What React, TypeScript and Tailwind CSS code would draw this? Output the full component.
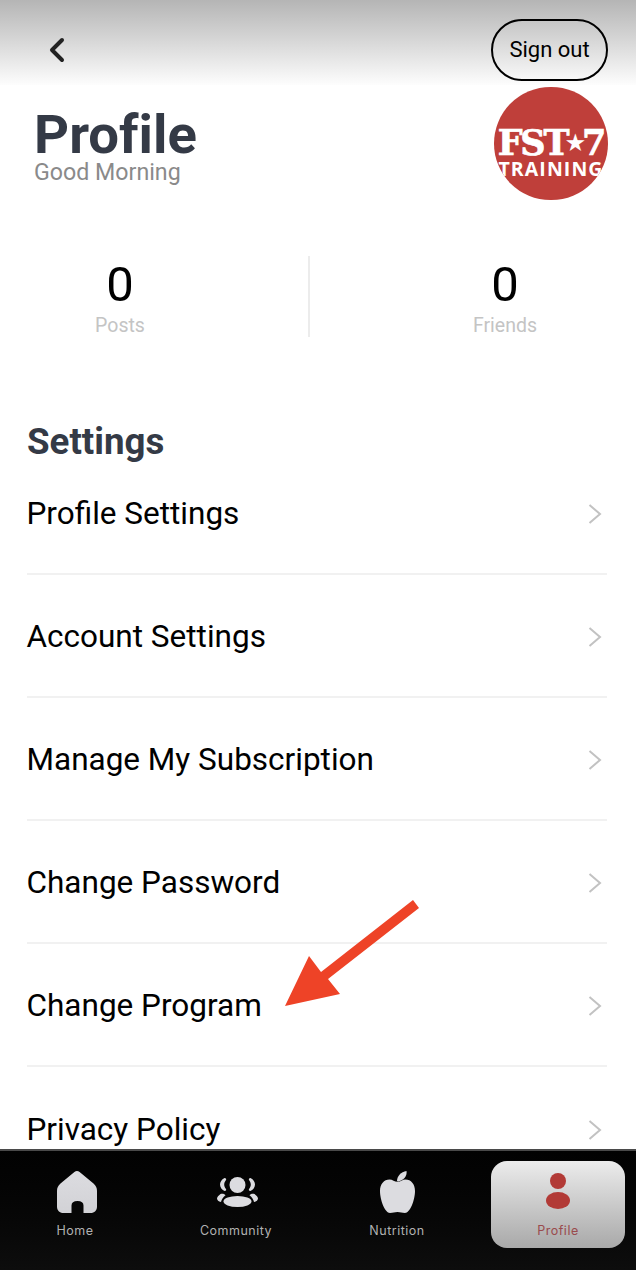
import { ChevronLeft } from "lucide-react";

const settingsRows = [
  "Profile Settings",
  "Account Settings",
  "Manage My Subscription",
  "Change Password",
  "Change Program",
  "Privacy Policy",
];

function FstLogo() {
  return (
    <div className="flex h-[113px] w-[114px] shrink-0 flex-col items-center justify-center overflow-hidden rounded-full bg-[#bf3f3a] pt-[20px] text-white">
      <div className="flex items-center font-['DejaVu_Serif',serif] text-[35px] leading-[26px] font-bold tracking-[-2.2px] whitespace-nowrap [-webkit-text-stroke:0.7px_white]">
        FST<span className="mx-[-1px] text-[21px] [-webkit-text-stroke:0]">★</span>7
      </div>
      <div className="mt-[5px] font-['Open_Sans',sans-serif] text-[19.5px] leading-[16px] font-bold tracking-[1.1px] whitespace-nowrap">
        TRAINING
      </div>
    </div>
  );
}

function Stat({ value, label, className }: { value: string; label: string; className: string }) {
  return (
    <div className={`flex w-[240px] flex-col items-center pt-[3px] ${className}`}>
      <span className="text-[49px] leading-[52px] text-black">{value}</span>
      <span className="mt-[2px] text-[19.5px] leading-[26px] text-[#c4c4c4]">{label}</span>
    </div>
  );
}

function RowChevron() {
  return (
    <svg viewBox="0 0 14 22" className="h-[22px] w-[14px]" fill="none" stroke="#c2c2c2" strokeWidth="2">
      <path d="M1.5 2 L12 11 L1.5 20" />
    </svg>
  );
}

function Row({ label, last }: { label: string; last: boolean }) {
  return (
    <div className={`flex h-[123px] items-center justify-between pt-[2px] ${last ? "" : "border-b-2 border-[#f1f1f1]"}`}>
      <span className="ml-[-0.5px] text-[31.5px] leading-[40px] text-black">{label}</span>
      <div className="mr-[5px]">
        <RowChevron />
      </div>
    </div>
  );
}

function HomeIcon() {
  return (
    <svg viewBox="0 0 40 42" className="ml-[4px] h-[42px] w-[40px]">
      <defs>
        <linearGradient id="tabFill" x1="0" y1="0" x2="0" y2="1">
          <stop offset="0" stopColor="#dcdce0" />
          <stop offset="1" stopColor="#d2d2d6" />
        </linearGradient>
      </defs>
      <path
        d="M17.4 1 C19 -0.3 21 -0.3 22.6 1 L36.5 12.5 C39 14.6 40 17 40 20 L40 35.5 C40 39.5 37.5 42 33.5 42 L26.5 42 L26.5 34.5 C26.5 31.5 24.5 30 20.5 30 C16.5 30 14.5 31.5 14.5 34.5 L14.5 42 L6.5 42 C2.5 42 0 39.5 0 35.5 L0 20 C0 17 1 14.6 3.5 12.5 Z"
        fill="url(#tabFill)"
      />
    </svg>
  );
}

function CommunityIcon() {
  return (
    <svg viewBox="0 0 41 30" className="mb-[6px] ml-[2px] h-[30px] w-[41px]" fill="#dcdce0">
      <circle cx="20.5" cy="8" r="8" />
      <ellipse cx="20.5" cy="24.5" rx="14" ry="5.5" />
      <path d="M7.5 1 C4.5 2.5 3 5 3 7.5 C3 10 4.5 12.5 7.5 14 C9 14 9.5 13 9 12 C7.8 10.5 7.2 9 7.2 7.5 C7.2 6 7.8 4.5 9 3 C9.5 2 9 1 7.5 1 Z" />
      <path d="M33.5 1 C36.5 2.5 38 5 38 7.5 C38 10 36.5 12.5 33.5 14 C32 14 31.5 13 32 12 C33.2 10.5 33.8 9 33.8 7.5 C33.8 6 33.2 4.5 32 3 C31.5 2 32 1 33.5 1 Z" />
      <path d="M3.5 17 C1.5 18.5 0 20 0 21.5 C0 23 1.5 24.5 4 25 C4.5 22.5 6 20 8.5 18.2 C8 16.8 5 16.2 3.5 17 Z" />
      <path d="M37.5 17 C39.5 18.5 41 20 41 21.5 C41 23 39.5 24.5 37 25 C36.5 22.5 35 20 32.5 18.2 C33 16.8 36 16.2 37.5 17 Z" />
    </svg>
  );
}

function AppleIcon() {
  return (
    <svg viewBox="0 0 35 42" className="h-[42px] w-[35px]" fill="#dcdce0">
      <path d="M17 10 C17 5 21 1 26.5 0 C27.5 5 23 10 18 10.5 Z" />
      <path d="M9.5 8.5 C12.5 8.5 14.5 10.8 17.5 10.8 C20.5 10.8 22.5 8.5 25.5 8.5 C31 8.5 35 13 35 20 C35 29 30 42 25 42 C22 42 20.5 41 17.5 41 C14.5 41 13 42 10 42 C5 42 0 29 0 20 C0 13 4 8.5 9.5 8.5 Z" />
    </svg>
  );
}

function ProfileIcon() {
  return (
    <svg viewBox="0 0 24 36" className="mb-[4px] h-[36px] w-[24px]" fill="#b23a36">
      <circle cx="12" cy="8" r="8" />
      <ellipse cx="12" cy="27.5" rx="12" ry="8.5" />
    </svg>
  );
}

function TabItem({ label, active, icon }: { label: string; active?: boolean; icon: React.ReactNode }) {
  return (
    <div
      className={`relative flex h-[87px] w-[134px] flex-col items-center rounded-[16px] ${
        active ? "bg-gradient-to-b from-[#ececec] to-[#a9a9a9]" : ""
      }`}
    >
      <div className="flex h-[52px] items-end">{icon}</div>
      <span
        className={`mt-[9px] font-['Inter',sans-serif] text-[12.5px] leading-[18px] tracking-[0.5px] opacity-[0.99] ${
          active ? "text-[#9a4a4c]" : "text-[#b4b4b4]"
        }`}
      >
        {label}
      </span>
    </div>
  );
}

export default function App() {
  return (
    <div className="relative flex h-[1270px] w-[636px] flex-col overflow-hidden bg-white font-['Roboto',sans-serif]">
      <header className="flex h-[85px] shrink-0 items-start justify-between bg-gradient-to-b from-[#b5b5b5] to-[#fdfdfd] pt-[19px] pr-[28px] pl-[35px]">
        <ChevronLeft className="mt-[11px] h-[40px] w-[44px] text-[#222222]" strokeWidth={2.4} />
        <button className="flex h-[62px] w-[117px] items-center justify-center rounded-[31px] border-2 border-black pb-[2px] text-[22px] text-black">
          Sign out
        </button>
      </header>

      <section className="flex shrink-0 items-start justify-between pt-[2px] pr-[28px] pl-[34px]">
        <div className="pt-[24px]">
          <h1 className="text-[54.5px] leading-[46px] font-bold text-[#343a46] [font-variant-ligatures:none]">Profile</h1>
          <p className="mt-[1px] text-[23.2px] leading-[28px] text-[#8a8a8a]">Good Morning</p>
        </div>
        <FstLogo />
      </section>

      <section className="mt-[56px] flex h-[81px] shrink-0">
        <Stat value="0" label="Posts" className="" />
        <div className="ml-[68px] h-full w-[2px] bg-[#ececec]" />
        <Stat value="0" label="Friends" className="ml-[75px]" />
      </section>

      <main className="flex min-h-0 flex-1 flex-col overflow-hidden pr-[29px] pl-[27px]">
        <h2 className="mt-[83px] shrink-0 text-[36.7px] leading-[44px] font-bold text-[#343a46]">Settings</h2>
        <div className="mt-[-12px] shrink-0">
          {settingsRows.map((label, i) => (
            <Row key={label} label={label} last={i === settingsRows.length - 1} />
          ))}
        </div>
      </main>

      <nav className="flex h-[121px] shrink-0 gap-[27px] border-t-2 border-[#4a4a4a] bg-gradient-to-b from-[#020202] to-[#0d0d0d] pt-[10px] pl-[8px]">
        <TabItem label="Home" icon={<HomeIcon />} />
        <TabItem label="Community" icon={<CommunityIcon />} />
        <TabItem label="Nutrition" icon={<AppleIcon />} />
        <TabItem label="Profile" active icon={<ProfileIcon />} />
      </nav>

      {/* annotation arrow over the list */}
      <svg className="pointer-events-none absolute top-[880px] left-[260px] h-[140px] w-[180px]" viewBox="260 880 180 140">
        <path d="M413 900 L419 908 L328 979 L340 994 L285 1006 L309 956 L321 972 Z" fill="#ee4327" />
      </svg>
    </div>
  );
}
